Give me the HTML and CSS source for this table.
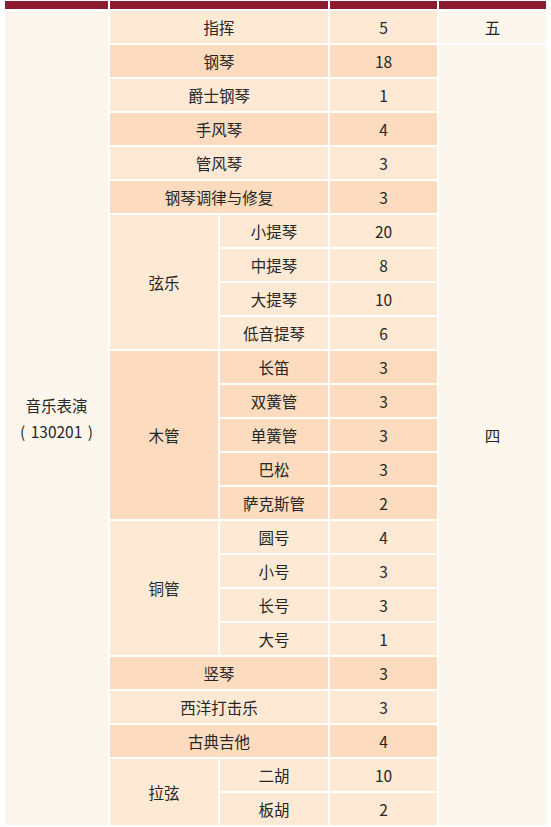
FILE: index.html
```html
<!DOCTYPE html>
<html lang="zh-CN">
<head>
<meta charset="utf-8">
<title>音乐表演</title>
<link rel="stylesheet" href="styles.css">
</head>
<body>
<div class="table">
  <div class="head"></div>
  <div class="head span2"></div>
  <div class="head"></div>
  <div class="head"></div>

  <div class="cell pale major">音乐表演<br>(&nbsp;130201&nbsp;)</div>
  <div class="cell light span2">指挥</div>
  <div class="cell light">5</div>
  <div class="cell pale">五</div>

  <div class="cell dark span2">钢琴</div>
  <div class="cell dark">18</div>
  <div class="cell pale rest">四</div>

  <div class="cell light span2">爵士钢琴</div>
  <div class="cell light">1</div>

  <div class="cell dark span2">手风琴</div>
  <div class="cell dark">4</div>

  <div class="cell light span2">管风琴</div>
  <div class="cell light">3</div>

  <div class="cell dark span2">钢琴调律与修复</div>
  <div class="cell dark">3</div>

  <div class="cell light rows4">弦乐</div>
  <div class="cell light">小提琴</div><div class="cell light">20</div>
  <div class="cell light">中提琴</div><div class="cell light">8</div>
  <div class="cell light">大提琴</div><div class="cell light">10</div>
  <div class="cell light">低音提琴</div><div class="cell light">6</div>

  <div class="cell dark rows5">木管</div>
  <div class="cell dark">长笛</div><div class="cell dark">3</div>
  <div class="cell dark">双簧管</div><div class="cell dark">3</div>
  <div class="cell dark">单簧管</div><div class="cell dark">3</div>
  <div class="cell dark">巴松</div><div class="cell dark">3</div>
  <div class="cell dark">萨克斯管</div><div class="cell dark">2</div>

  <div class="cell light rows4">铜管</div>
  <div class="cell light">圆号</div><div class="cell light">4</div>
  <div class="cell light">小号</div><div class="cell light">3</div>
  <div class="cell light">长号</div><div class="cell light">3</div>
  <div class="cell light">大号</div><div class="cell light">1</div>

  <div class="cell dark span2">竖琴</div>
  <div class="cell dark">3</div>

  <div class="cell light span2">西洋打击乐</div>
  <div class="cell light">3</div>

  <div class="cell dark span2">古典吉他</div>
  <div class="cell dark">4</div>

  <div class="cell light rows2">拉弦</div>
  <div class="cell light">二胡</div><div class="cell light">10</div>
  <div class="cell light">板胡</div><div class="cell light">2</div>
</div>
</body>
</html>
```

FILE: styles.css
```css
html, body {
  margin: 0;
  padding: 0;
  background: #ffffff;
}

body {
  font-family: "Noto Sans CJK SC", "Noto Sans", sans-serif;
  font-size: 15.5px;
  color: #262626;
}

.table {
  display: grid;
  grid-template-columns: 103px 108px 108px 107px 107px;
  grid-template-rows: 8px repeat(24, 32px);
  gap: 2px;
  padding: 1px 0 0 5px;
}

.head {
  background: #8c1b2f;
}

.span2 {
  grid-column: span 2;
}

.cell {
  display: flex;
  align-items: center;
  justify-content: center;
  text-align: center;
  line-height: 26px;
}

.major {
  grid-row: span 24;
  word-spacing: 2px;
}

.rest {
  grid-row: span 23;
}

.rows4 {
  grid-row: span 4;
}

.rows5 {
  grid-row: span 5;
}

.rows2 {
  grid-row: span 2;
}

.pale {
  background: #fdf6ec;
}

.light {
  background: #fde9d4;
}

.dark {
  background: #fcdbbe;
}
```
